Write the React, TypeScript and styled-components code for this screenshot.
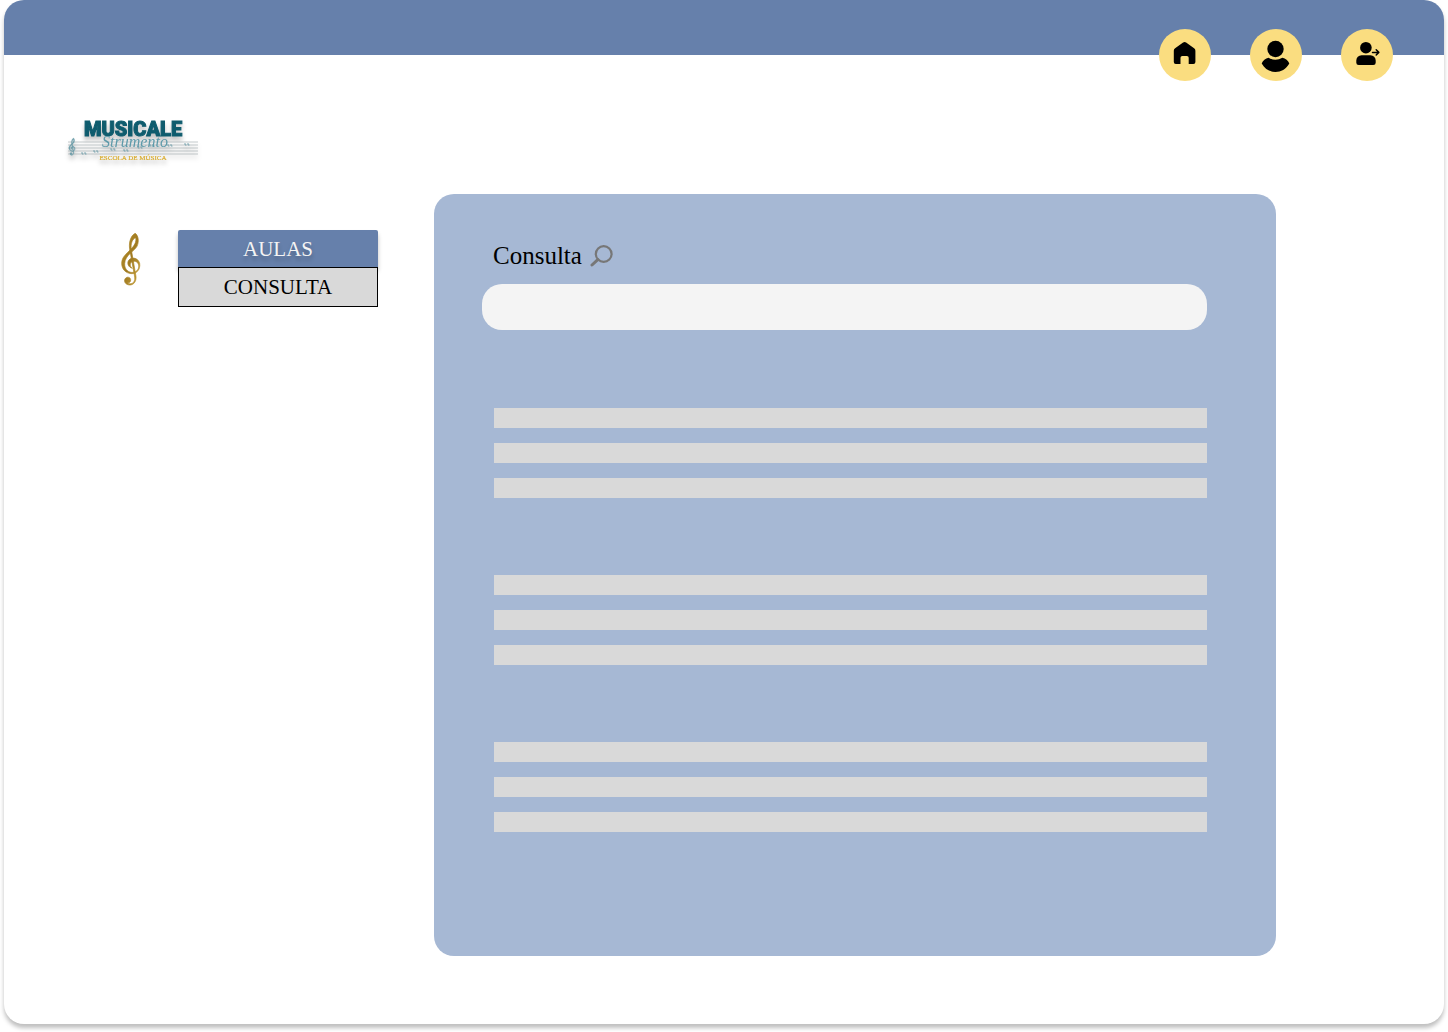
import React from "react";
import styled, { createGlobalStyle } from "styled-components";

const colors = {
  blue: "#6680ab",
  panel: "#a6b8d4",
  yellow: "#fadd80",
  grey: "#d9d9d9",
  field: "#f4f4f4",
  teal: "#0f5c6e",
  gold: "#d9ab2c",
};

const GlobalStyle = createGlobalStyle`
  *, *::before, *::after { box-sizing: border-box; }
  body {
    margin: 0;
    background: #fff;
    color: #000;
    font-family: "Liberation Serif", "Times New Roman", serif;
  }
`;

const Page = styled.div`
  min-height: calc(100vh - 8px);
  margin: 0 4px 8px;
  border-radius: 20px;
  background: #fff;
  box-shadow: 0 4px 4px rgba(0, 0, 0, 0.25);
`;

const Header = styled.header`
  height: 55px;
  padding: 29px 51px 0;
  border-radius: 20px 20px 0 0;
  background: ${colors.blue};
`;

const TopNav = styled.nav`
  display: flex;
  justify-content: flex-end;
  gap: 39px;
`;

const RoundLink = styled.a`
  display: flex;
  flex: none;
  width: 52px;
  height: 52px;
  border-radius: 50%;
  background: ${colors.yellow};
  color: #000;
`;

const Brand = styled.div`
  display: flex;
  padding: 59px 60px 20px;
`;

const LogoSvg = styled.svg`
  display: block;
  overflow: visible;
  filter: drop-shadow(0 4px 2px rgba(0, 0, 0, 0.25));
`;

const Content = styled.div`
  display: flex;
  align-items: flex-start;
  gap: 56px;
  padding: 0 168px 68px 114px;
`;

const Sidebar = styled.aside`
  display: flex;
  flex: none;
  gap: 36px;
  padding-top: 36px;
`;

const ClefSvg = styled.svg`
  display: block;
  margin-top: 3px;
`;

const Menu = styled.nav`
  display: flex;
  flex-direction: column;
  width: 200px;
`;

const MenuLink = styled.a<{ $active?: boolean }>`
  display: flex;
  align-items: center;
  justify-content: center;
  height: ${(p) => (p.$active ? 37 : 40)}px;
  border: ${(p) => (p.$active ? "none" : "1px solid #000")};
  border-radius: ${(p) => (p.$active ? "2px 2px 0 0" : "0")};
  background: ${(p) => (p.$active ? colors.blue : colors.grey)};
  box-shadow: ${(p) => (p.$active ? "0 4px 4px rgba(0, 0, 0, 0.25)" : "none")};
  color: ${(p) => (p.$active ? colors.field : "#000")};
  font-size: 21px;
  line-height: 24px;
  text-decoration: none;
  text-shadow: ${(p) => (p.$active ? "0 4px 4px rgba(0, 0, 0, 0.25)" : "none")};
`;

const Panel = styled.main`
  flex: 1;
  min-width: 0;
  padding: 44px 69px 124px 48px;
  border-radius: 20px;
  background: ${colors.panel};
`;

const SearchLabel = styled.label`
  display: flex;
  align-items: center;
  gap: 8px;
  padding-left: 11px;
  font-size: 25px;
  line-height: 36px;
`;

const SearchInput = styled.input`
  display: block;
  width: 100%;
  height: 46px;
  margin-top: 10px;
  padding: 0 20px;
  border: 0;
  border-radius: 20px;
  background: ${colors.field};
  font: inherit;
  font-size: 21px;
`;

const Results = styled.div`
  display: flex;
  flex-direction: column;
  gap: 77px;
  padding: 78px 0 0 12px;
`;

const ResultGroup = styled.ul`
  display: flex;
  flex-direction: column;
  gap: 15px;
  margin: 0;
  padding: 0;
  list-style: none;
`;

const ResultRow = styled.li`
  height: 20px;
  background: ${colors.grey};
`;

const HomeIcon = () => (
  <svg width="52" height="52" viewBox="0 0 52 52" fill="currentColor" aria-hidden="true">
    <path d="M24.1 13.6a2.6 2.6 0 0 1 3 0l8 5.6a3 3 0 0 1 1.3 2.5v11.2a2 2 0 0 1-2 2h-4.7v-6.2a1.800 1.800 0 0 0-1.800-1.800h-4.600a1.800 1.800 0 0 0-1.800 1.800v6.200h-4.700a2 2 0 0 1-2-2V21.700a3 3 0 0 1 1.300-2.500Z" />
  </svg>
);

const ProfileIcon = () => (
  <svg width="52" height="52" viewBox="0 0 52 52" fill="currentColor" aria-hidden="true">
    <circle cx="25.500" cy="20" r="8.200" />
    <path d="M18.600 28.700Q25.500 33 32.400 28.700C35.500 29.300 38.300 31.300 39.300 34.500C36 40.300 31 43 25.500 43S15 40.300 11.700 34.500C12.700 31.300 15.500 29.300 18.600 28.700Z" />
  </svg>
);

const LeaveIcon = () => (
  <svg width="52" height="52" viewBox="0 0 52 52" fill="currentColor" aria-hidden="true">
    <circle cx="24.900" cy="18.700" r="5.800" />
    <path d="M20.500 26.300h9a5.200 5.200 0 0 1 5.200 5.200v2.200a2.400 2.400 0 0 1-2.400 2.400H17.700a2.400 2.400 0 0 1-2.400-2.400v-2.200a5.200 5.200 0 0 1 5.200-5.200Z" />
    <path d="M31.500 23.400h6M35.200 20.800l2.600 2.600-2.600 2.600" fill="none" stroke="currentColor" strokeWidth="1.500" strokeLinecap="round" strokeLinejoin="round" />
  </svg>
);

const SearchIcon = () => (
  <svg width="23" height="22" viewBox="0 0 23 22" fill="none" stroke="#777" aria-hidden="true">
    <circle cx="13.700" cy="9" r="7.900" strokeWidth="2.200" />
    <path d="M7.800 14.600 2 20" strokeWidth="3" strokeLinecap="round" />
  </svg>
);

const ClefShape = () => (
  <path d="M25 54C20 34 25 8 41 1C50 8 53 25 46 40C38 55 10 66 9 92C8 111 23 120 35 118C46 116 52 108 51 98C50 88 42 83 34 85C24 88 23 100 32 106C20 103 15 91 21 82C30 70 50 75 54 91C57 109 45 123 29 122C12 121 0 108 0 91C0 72 15 62 26 50C38 38 45 27 42 14C33 17 26 31 29 50L43 130C45 147 34 157 23 156C11 155 6 145 10 138C14 130 26 131 27 140C28 147 22 150 18 149C23 156 42 153 39 132Z" />
);

const Clef = () => (
  <ClefSvg width="24" height="53" viewBox="-11 0 72 159" aria-hidden="true">
    <defs>
      <linearGradient id="clefGold" x1="0" y1="0" x2="1" y2="1">
        <stop offset="0" stopColor="#b8912d" />
        <stop offset="0.5" stopColor="#a07a20" />
        <stop offset="1" stopColor="#c9a33c" />
      </linearGradient>
    </defs>
    <g fill="url(#clefGold)" stroke="url(#clefGold)" strokeWidth="2">
      <ClefShape />
    </g>
  </ClefSvg>
);

const staffLines = [28, 31, 34, 37, 40];
const notes = [
  [18, 40], [30, 38], [47, 36], [60, 37], [74, 34], [86, 32], [104, 32], [121, 31],
];

const Logo = () => (
  <LogoSvg width="138" height="60" viewBox="0 0 138 60" role="img" aria-label="Musicale Strumento, escola de música">
    <g stroke="#9aa5aa" strokeWidth="0.600">
      {staffLines.map((y) => (
        <path key={y} d={`M4 ${y}H134`} />
      ))}
    </g>
    <g transform="translate(5 24) scale(0.110)" fill="#6f9eaa" stroke="#6f9eaa" strokeWidth="4">
      <ClefShape />
    </g>
    <g fill="none" stroke="#6f9eaa" strokeWidth="0.900">
      {notes.map(([x, y]) => (
        <path key={x} d={`M${x} ${y}v-2M${x + 3} ${y}v-2M${x} ${y}h1.500M${x + 3} ${y}h1.500`} />
      ))}
    </g>
    <text x="69" y="22" textAnchor="middle" fontFamily='Roboto, "Liberation Sans", sans-serif' fontWeight="900" fontSize="20" fill={colors.teal} stroke={colors.teal} strokeWidth="1">
      MUSICALE
    </text>
    <text x="71" y="33" textAnchor="middle" fontFamily='"Liberation Serif", serif' fontStyle="italic" fontSize="16" fill="#5d9aaa">
      Strumento
    </text>
    <text x="69" y="46" textAnchor="middle" fontFamily='"Liberation Serif", serif' fontSize="7" fill={colors.gold} stroke={colors.gold} strokeWidth="0.200">
      ESCOLA DE MÚSICA
    </text>
  </LogoSvg>
);

const groups = [3, 3, 3];

export default function App() {
  return (
    <>
      <GlobalStyle />
      <Page>
        <Header>
          <TopNav aria-label="Principal">
            <RoundLink href="#inicio" aria-label="Início"><HomeIcon /></RoundLink>
            <RoundLink href="#perfil" aria-label="Perfil"><ProfileIcon /></RoundLink>
            <RoundLink href="#sair" aria-label="Sair"><LeaveIcon /></RoundLink>
          </TopNav>
        </Header>
        <Brand><Logo /></Brand>
        <Content>
          <Sidebar>
            <Clef />
            <Menu aria-label="Aulas">
              <MenuLink href="#aulas" $active>AULAS</MenuLink>
              <MenuLink href="#consulta">CONSULTA</MenuLink>
            </Menu>
          </Sidebar>
          <Panel>
            <SearchLabel htmlFor="consulta">
              Consulta
              <SearchIcon />
            </SearchLabel>
            <SearchInput id="consulta" type="search" />
            <Results>
              {groups.map((count, group) => (
                <ResultGroup key={group}>
                  {Array.from({ length: count }, (_, row) => (
                    <ResultRow key={row} />
                  ))}
                </ResultGroup>
              ))}
            </Results>
          </Panel>
        </Content>
      </Page>
    </>
  );
}
